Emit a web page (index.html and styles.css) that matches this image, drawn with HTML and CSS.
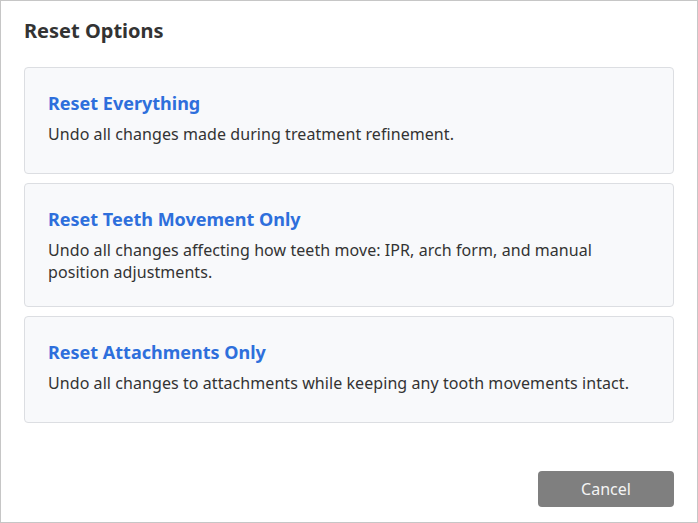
FILE: index.html
```html
<!DOCTYPE html>
<html lang="en">
<head>
<meta charset="utf-8">
<title>Reset Options</title>
<link rel="stylesheet" href="styles.css">
</head>
<body>
<div class="dialog">
  <h1 class="dialog-title">Reset Options</h1>
  <div class="options">
    <div class="option option-single">
      <div class="option-title">Reset Everything</div>
      <div class="option-desc">Undo all changes made during treatment refinement.</div>
    </div>
    <div class="option">
      <div class="option-title">Reset Teeth Movement Only</div>
      <div class="option-desc">Undo all changes affecting how teeth move: IPR, arch form, and manual position adjustments.</div>
    </div>
    <div class="option option-single">
      <div class="option-title">Reset Attachments Only</div>
      <div class="option-desc">Undo all changes to attachments while keeping any tooth movements intact.</div>
    </div>
  </div>
  <div class="footer">
    <button class="btn-cancel" type="button">Cancel</button>
  </div>
</div>
</body>
</html>
```

FILE: styles.css
```css
html, body {
  margin: 0;
  padding: 0;
  background: #ffffff;
}

body {
  font-family: "Noto Sans", "Open Sans", sans-serif;
  color: #333333;
}

.dialog {
  box-sizing: border-box;
  width: 698px;
  height: 523px;
  border: 1px solid #c6c6c6;
  padding: 16px 23px 15px 23px;
  display: flex;
  flex-direction: column;
}

.dialog-title {
  margin: 0 0 22px 0;
  font-size: 20px;
  line-height: 28px;
  font-weight: 700;
  color: #333333;
}

.options {
  display: flex;
  flex-direction: column;
  gap: 9px;
}

.option {
  box-sizing: border-box;
  background: #f8f9fb;
  border: 1px solid #dcdee2;
  border-radius: 4px;
  padding: 24px 24px 23px 23px;
}

.option-single {
  min-height: 107px;
}

.option-title {
  font-size: 18px;
  line-height: 22px;
  font-weight: 700;
  color: #2e6fdc;
}

.option-desc {
  margin-top: 9px;
  font-size: 16px;
  line-height: 22px;
  letter-spacing: 0.07px;
  color: #333333;
}

.footer {
  margin-top: auto;
  display: flex;
  justify-content: flex-end;
}

.btn-cancel {
  width: 136px;
  height: 36px;
  border: none;
  border-radius: 4px;
  background: #7f7f7f;
  color: #f4f4f4;
  font-family: "Noto Sans", "Open Sans", sans-serif;
  font-size: 16px;
  cursor: pointer;
}
```
